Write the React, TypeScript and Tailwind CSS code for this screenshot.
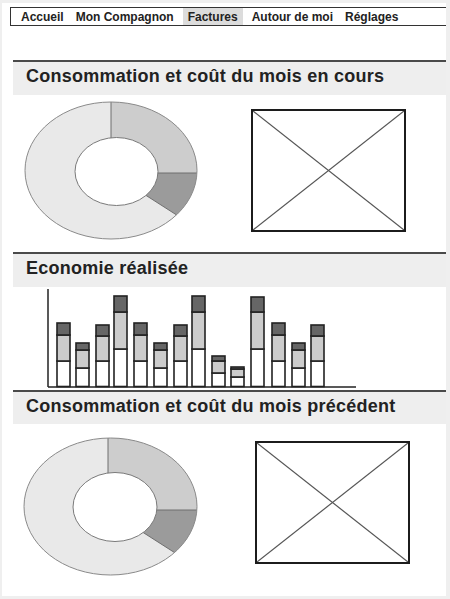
import React from 'react';

const FONT = "font-['Liberation_Sans',Arial,sans-serif]";

interface DonutProps {
  top: number;
  height: number;
  cx: number;
  cy: number;
  rx: number;
  ry: number;
  hx: number;
  hy: number;
  hrx: number;
  hry: number;
  ax: number;
  ay: number;
  id: string;
}

// donut drawn in page coordinates (viewBox offset = where the svg sits)
function Donut({ top, height, cx, cy, rx, ry, hx, hy, hrx, hry, ax, ay, id }: DonutProps) {
  const slope = 0.64;
  const far = cx + rx + 20;
  return (
    <svg width={220} height={height} viewBox={`2 ${top} 220 ${height}`} className="shrink-0">
      <defs>
        <clipPath id={id}>
          <ellipse cx={cx} cy={cy} rx={rx} ry={ry} />
        </clipPath>
      </defs>
      <ellipse cx={cx} cy={cy} rx={rx} ry={ry} fill="#e9e9e9" />
      <g clipPath={`url(#${id})`}>
        <polygon points={`${ax},${ay} ${ax},${cy - ry - 5} ${far},${cy - ry - 5} ${far},${ay}`} fill="#cdcdcd" />
        <polygon points={`${ax},${ay} ${far},${ay} ${far},${ay + (far - ax) * slope}`} fill="#9b9b9b" />
        <line x1={ax} y1={ay} x2={ax} y2={cy - ry - 5} stroke="#6f6f6f" strokeWidth={1} />
        <line x1={ax} y1={ay} x2={far} y2={ay} stroke="#6f6f6f" strokeWidth={1} />
        <line x1={ax} y1={ay} x2={far} y2={ay + (far - ax) * slope} stroke="#6f6f6f" strokeWidth={1} />
      </g>
      <ellipse cx={hx} cy={hy} rx={hrx} ry={hry} fill="#ffffff" stroke="#7a7a7a" strokeWidth={1} />
      <ellipse cx={cx} cy={cy} rx={rx} ry={ry} fill="none" stroke="#8a8a8a" strokeWidth={1} />
    </svg>
  );
}

function Placeholder({ className }: { className: string }) {
  return (
    <div className={`shrink-0 border-2 border-[#1c1c1c] bg-white ${className}`}>
      <svg width="100%" height="100%" viewBox="0 0 100 100" preserveAspectRatio="none" className="block">
        <line x1="0" y1="0" x2="100" y2="100" stroke="#555" strokeWidth={1.2} vectorEffect="non-scaling-stroke" />
        <line x1="100" y1="0" x2="0" y2="100" stroke="#555" strokeWidth={1.2} vectorEffect="non-scaling-stroke" />
      </svg>
    </div>
  );
}

function SectionHeader({ title, h }: { title: string; h: string }) {
  return (
    <div className={`ml-[11px] border-t-2 border-[#4a4a4a] bg-[#eeeeee] pl-[13px] pt-[4px] ${h}`}>
      <h2 className={`${FONT} text-[18px] font-bold leading-[20px] tracking-[0.25px] text-[#222]`}>{title}</h2>
    </div>
  );
}

// [top, dark bottom, gray bottom] in page y, bars sit on y=387
const bars: [number, number, number][] = [
  [323, 335, 361],
  [343, 350, 368],
  [325, 336, 361],
  [296, 312, 349],
  [323, 335, 361],
  [343, 350, 368],
  [325, 336, 361],
  [296, 312, 349],
  [356, 361, 373],
  [367, 369, 377],
  [297, 312, 349],
  [323, 335, 361],
  [343, 350, 368],
  [325, 336, 361],
];
const barX = [57, 76, 96, 114, 134, 154, 174, 192, 212, 231, 251, 272, 292, 311];

function BarChart() {
  const base = 386.5;
  return (
    <svg width={444} height={103} viewBox="2 287 444 103" className="block">
      {bars.map(([t, d, g], i) => {
        const x = barX[i];
        return (
          <g key={i} stroke="#222" strokeWidth={1.6}>
            <rect x={x} y={g} width={13} height={base - g} fill="#ffffff" />
            <rect x={x} y={d} width={13} height={g - d} fill="#cccccc" />
            <rect x={x} y={t} width={13} height={d - t} fill="#666666" />
          </g>
        );
      })}
      <line x1={48} y1={289} x2={48} y2={387} stroke="#222" strokeWidth={1.5} />
      <line x1={48} y1={387} x2={356} y2={387} stroke="#222" strokeWidth={1.5} />
    </svg>
  );
}

export default function App() {
  return (
    <div className="h-[599px] w-[450px] overflow-hidden bg-[#efefef] pb-[3px] pl-[2px] pr-[4px] pt-[3px]">
      <div className="h-full overflow-hidden bg-white">
        <nav className={`${FONT} ml-[8px] mt-[4px] flex h-[19px] items-stretch border-y border-l border-[#333] text-[12px] font-bold text-[#222]`}>
          <span className="ml-[10px] flex items-center">Accueil</span>
          <span className="ml-[12px] flex items-center">Mon Compagnon</span>
          <span className="ml-[9px] flex items-center bg-[#dcdcdc] px-[5px]">Factures</span>
          <span className="ml-[9px] flex items-center">Autour de moi</span>
          <span className="ml-[12px] flex items-center">Réglages</span>
        </nav>

        <div className="mt-[34px]">
          <SectionHeader title="Consommation et coût du mois en cours" h="h-[35px]" />
        </div>
        <div className="flex h-[157px] items-start">
          <Donut id="d1" top={95} height={157} cx={111} cy={170.5} rx={86} ry={68.5} hx={116.5} hy={171.5} hrx={41.5} hry={34} ax={111} ay={173} />
          <Placeholder className="ml-[29px] mt-[14px] h-[123px] w-[155px]" />
        </div>

        <SectionHeader title="Economie réalisée" h="h-[35px]" />
        <BarChart />

        <SectionHeader title="Consommation et coût du mois précédent" h="h-[34px]" />
        <div className="flex h-[171px] items-start">
          <Donut id="d2" top={424} height={171} cx={110.5} cy={506.5} rx={86.5} ry={68.5} hx={115} hy={507} hrx={42} hry={34.5} ax={108} ay={510} />
          <Placeholder className="ml-[33px] mt-[17px] h-[123px] w-[155px]" />
        </div>
      </div>
    </div>
  );
}
